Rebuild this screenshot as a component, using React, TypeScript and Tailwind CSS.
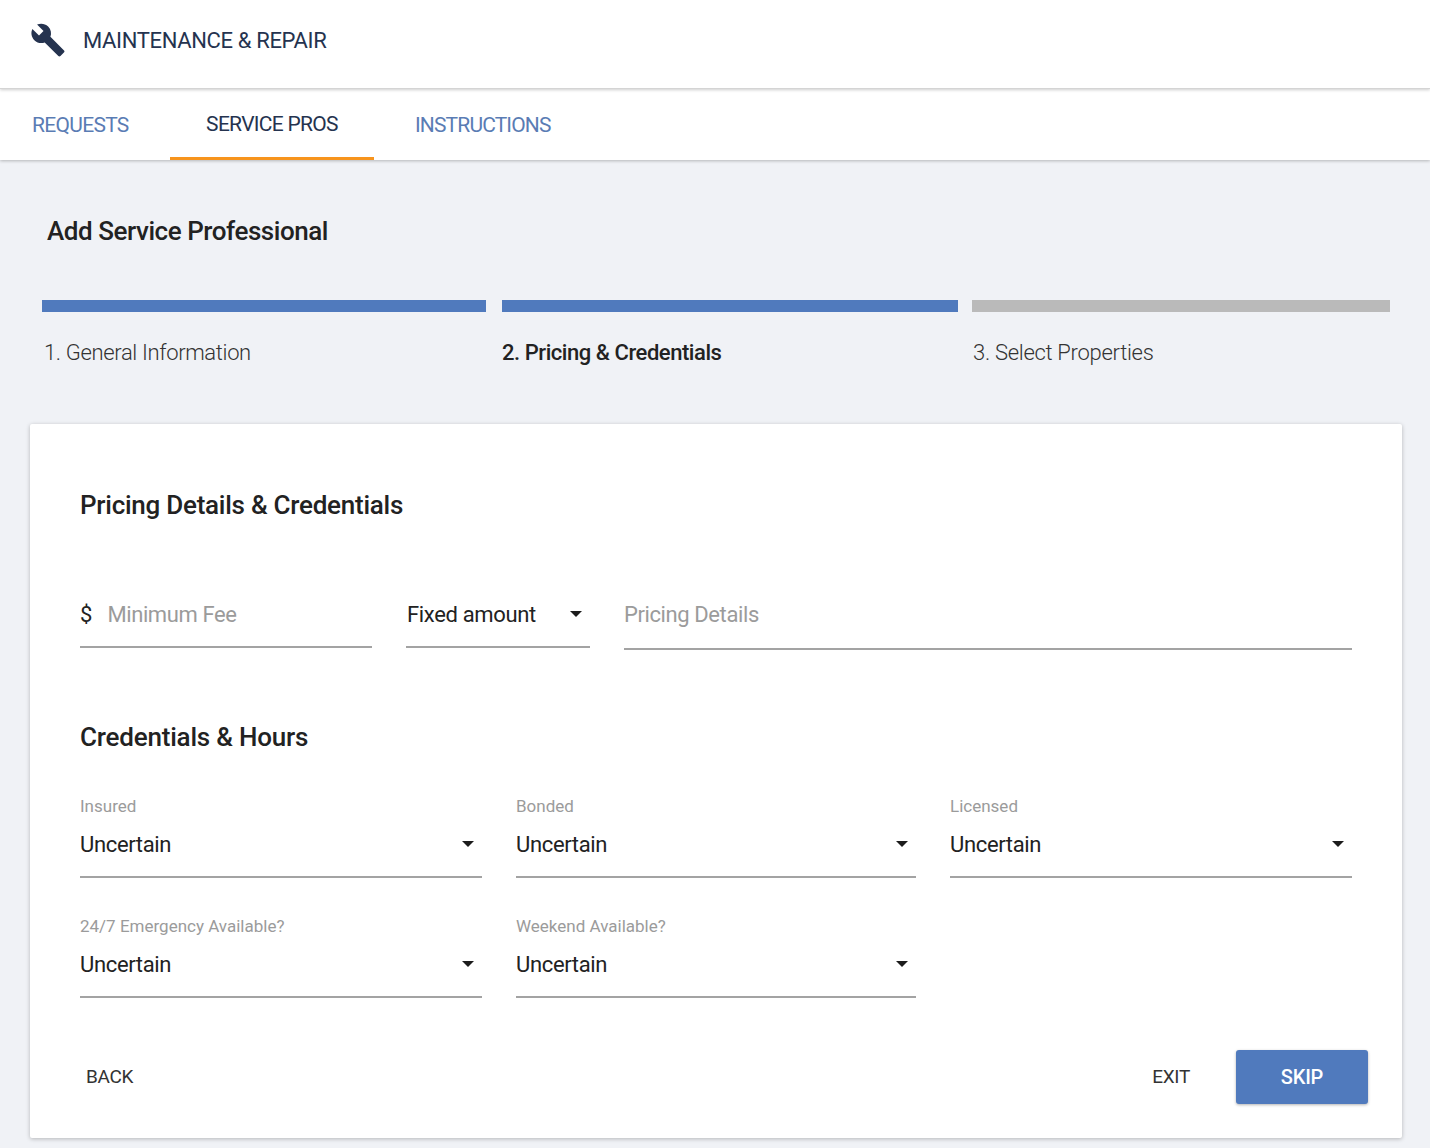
const font = "font-['Roboto',sans-serif]";

function Caret() {
  return (
    <svg viewBox="0 0 10 5" className="h-[6px] w-[12px] shrink-0 fill-[#1c1c1c]">
      <path d="M0 0l5 5 5-5z" />
    </svg>
  );
}

function SelectField({ label, value }: { label: string; value: string }) {
  return (
    <div>
      <div className="h-[22px] text-[17px] leading-[22px] text-[#9b9b9b]">{label}</div>
      <div className="mt-[10px] flex h-[51px] items-start justify-between border-b-2 border-[#a3a3a3] pr-[8px] pt-[4px]">
        <span className="text-[22px] leading-[28px] tracking-[-0.35px] text-[#222]">{value}</span>
        <span className="mt-[10px]">
          <Caret />
        </span>
      </div>
    </div>
  );
}

export default function App() {
  return (
    <div className={`${font} h-[1148px] overflow-hidden bg-[#f0f2f6]`}>
      <header className="relative z-20 flex h-[89px] items-center border-b border-[#d4d4d4] bg-white pb-[8px] pl-[30px] shadow-[0_1px_3px_rgba(0,0,0,0.2)]">
        <svg viewBox="0 0 24 24" className="h-[36px] w-[36px] fill-[#25334f]">
          <path d="M22.7 19l-9.1-9.1c.9-2.3.4-5-1.5-6.9-2-2-5-2.4-7.4-1.3L9 6 6 9 1.6 4.7C.4 7.1.9 10.1 2.9 12.1c1.9 1.9 4.6 2.4 6.9 1.5l9.1 9.1c.4.4 1 .4 1.4 0l2.3-2.3c.5-.4.5-1.1.1-1.4z" />
        </svg>
        <span className="ml-[17px] text-[22px] tracking-[-0.35px] text-[#25334f]">MAINTENANCE &amp; REPAIR</span>
      </header>

      <nav className="relative z-10 flex h-[71px] bg-white shadow-[0_1px_3px_rgba(0,0,0,0.25)]">
        <a className="ml-[32px] flex w-[138px] items-center pt-[2px] text-[21px] tracking-[-0.7px] text-[#5a7cb4]">REQUESTS</a>
        <a className="flex w-[204px] items-center justify-center border-b-[3px] border-[#f7941d] pt-[4px] text-[21px] tracking-[-0.7px] text-[#25334f]">
          SERVICE PROS
        </a>
        <a className="ml-[41px] flex items-center pt-[2px] text-[21px] tracking-[-0.85px] text-[#5a7cb4]">INSTRUCTIONS</a>
      </nav>

      <main className="pl-[30px] pr-[28px]">
        <h1 className="ml-[17px] pt-[53px] text-[26px] font-medium leading-[36px] tracking-[-0.45px] text-[#222]">
          Add Service Professional
        </h1>

        <div className="mt-[51px] grid grid-cols-[460px_470px_418px] pl-[12px]">
          <div className="pr-[16px]">
            <div className="h-[12px] bg-[#507abd]" />
            <div className="ml-[2px] mt-[27px] text-[22px] font-light leading-[28px] tracking-[-0.35px] text-[#333]">1. General Information</div>
          </div>
          <div className="pr-[14px]">
            <div className="h-[12px] bg-[#507abd]" />
            <div className="mt-[27px] text-[22px] font-medium leading-[28px] tracking-[-0.45px] text-[#222]">2. Pricing &amp; Credentials</div>
          </div>
          <div>
            <div className="h-[12px] bg-[#bababa]" />
            <div className="ml-[1px] mt-[27px] text-[22px] font-light leading-[28px] tracking-[-0.3px] text-[#333]">3. Select Properties</div>
          </div>
        </div>

        <section className="mt-[57px] h-[714px] rounded-[2px] bg-white px-[50px] shadow-[0_1px_4px_rgba(0,0,0,0.25)]">
          <h2 className="pt-[63px] text-[26px] font-medium leading-[36px] tracking-[-0.25px] text-[#222]">
            Pricing Details &amp; Credentials
          </h2>

          <div className="mt-[76px] flex gap-[34px]">
            <div className="flex h-[49px] w-[292px] items-start gap-[15px] border-b-2 border-[#a3a3a3] pt-[2px]">
              <span className="text-[22px] leading-[28px] text-[#222]">$</span>
              <span className="text-[22px] leading-[28px] tracking-[-0.4px] text-[#9b9b9b]">Minimum Fee</span>
            </div>
            <div className="flex h-[49px] w-[184px] items-start justify-between border-b-2 border-[#a3a3a3] pl-[1px] pr-[8px] pt-[2px]">
              <span className="text-[22px] leading-[28px] tracking-[-0.35px] text-[#222]">Fixed amount</span>
              <span className="mt-[10px]">
                <Caret />
              </span>
            </div>
            <div className="h-[51px] flex-1 border-b-2 border-[#a3a3a3] pt-[2px]">
              <span className="text-[22px] leading-[28px] tracking-[-0.4px] text-[#9b9b9b]">Pricing Details</span>
            </div>
          </div>

          <h2 className="mt-[69px] text-[26px] font-medium leading-[36px] tracking-[-0.2px] text-[#222]">
            Credentials &amp; Hours
          </h2>

          <div className="mt-[40px] grid grid-cols-[402px_400px_402px] gap-x-[34px] gap-y-[37px]">
            <SelectField label="Insured" value="Uncertain" />
            <SelectField label="Bonded" value="Uncertain" />
            <SelectField label="Licensed" value="Uncertain" />
            <SelectField label="24/7 Emergency Available?" value="Uncertain" />
            <SelectField label="Weekend Available?" value="Uncertain" />
          </div>

          <div className="-mr-[16px] mt-[52px] flex items-center">
            <button className="ml-[6px] text-[19px] tracking-[-0.3px] text-[#333]">BACK</button>
            <button className="ml-auto text-[19px] tracking-[-0.3px] text-[#333]">EXIT</button>
            <button className="ml-[46px] h-[54px] w-[132px] rounded-[3px] bg-[#507abd] text-[20px] font-medium tracking-[-0.2px] text-white shadow-[0_1px_3px_rgba(0,0,0,0.3)]">
              SKIP
            </button>
          </div>
        </section>
      </main>
    </div>
  );
}
